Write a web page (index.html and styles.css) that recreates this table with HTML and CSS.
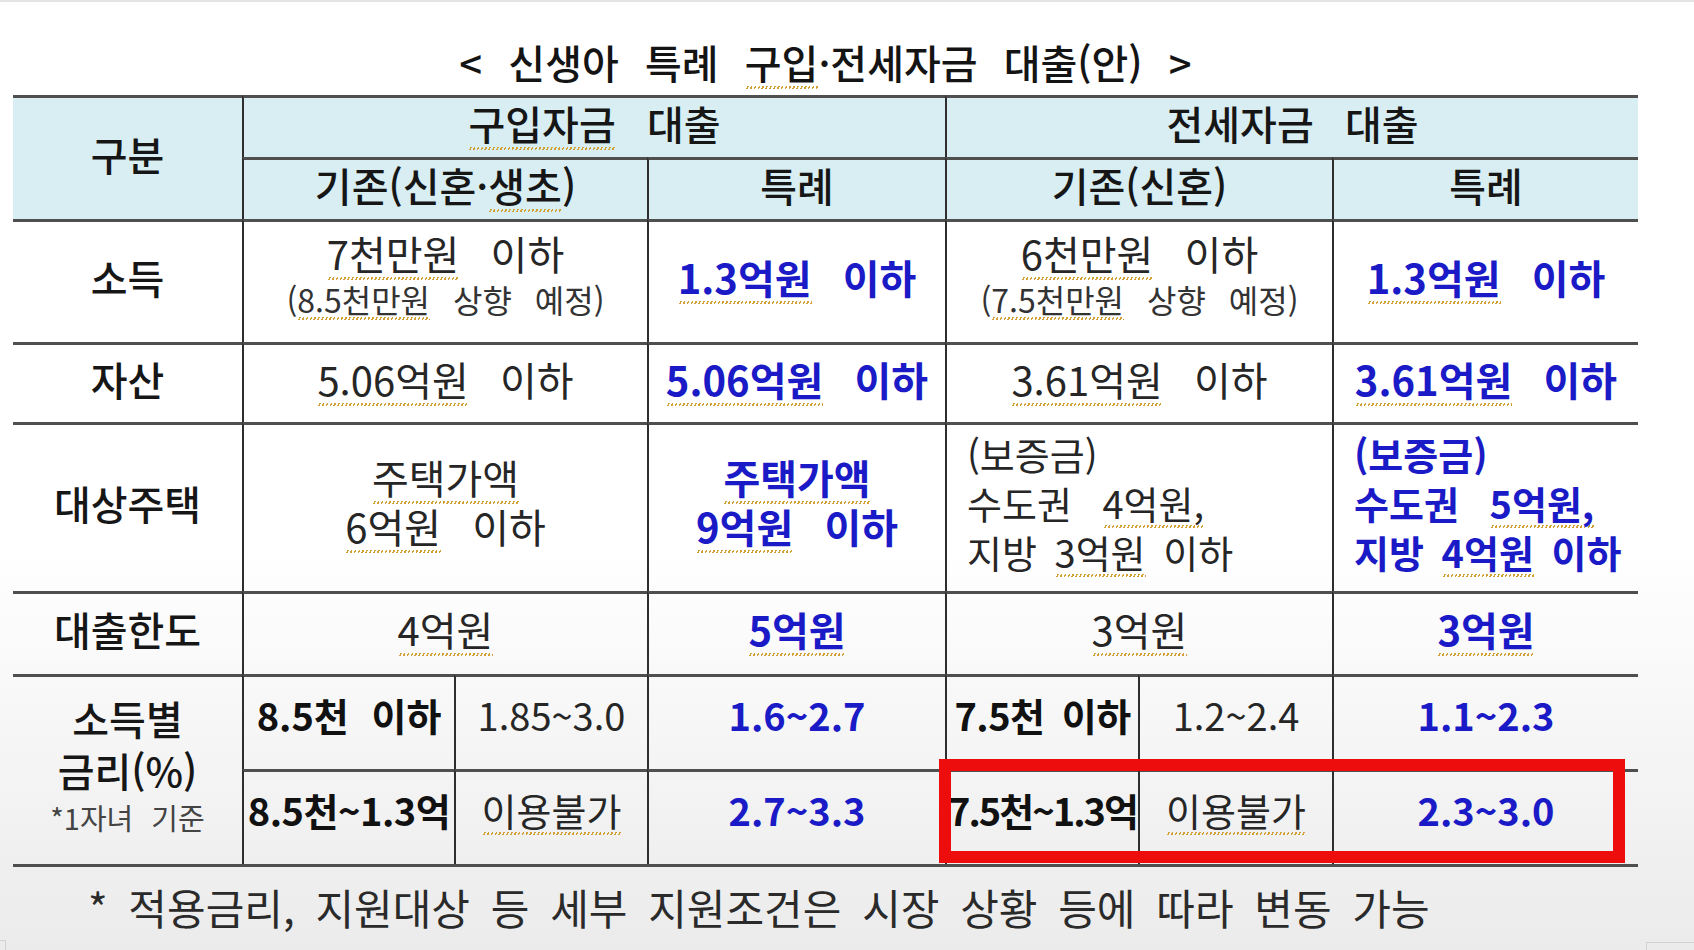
FILE: index.html
```html
<!DOCTYPE html>
<html lang="ko">
<head>
<meta charset="utf-8">
<title>신생아 특례 구입·전세자금 대출(안)</title>
<link rel="stylesheet" href="styles.css">
</head>
<body>
<div class="page">
  <div class="doc">
    <h1 class="title">&lt; 신생아 특례 <span class="sp">구입</span>·전세자금 대출(안) &gt;</h1>
    <div class="tbl">
      <div class="c first hd r2">구분</div>
      <div class="c hd s3"><div><span class="sp">구입자금</span> 대출</div></div>
      <div class="c hd s3"><div>전세자금 대출</div></div>

      <div class="c hd s2"><div>기존(신혼·<span class="sp">생초</span>)</div></div>
      <div class="c hd"><div>특례</div></div>
      <div class="c hd s2"><div>기존(신혼)</div></div>
      <div class="c hd"><div>특례</div></div>

      <div class="c first lbl">소득</div>
      <div class="c s2 inc"><div><span class="sp">7천만원</span> 이하</div><div class="small">(<span class="sp">8.5천만원</span> 상향 예정)</div></div>
      <div class="c blue"><div><span class="sp">1.3억원</span> 이하</div></div>
      <div class="c s2 inc"><div><span class="sp">6천만원</span> 이하</div><div class="small">(<span class="sp">7.5천만원</span> 상향 예정)</div></div>
      <div class="c blue"><div><span class="sp">1.3억원</span> 이하</div></div>

      <div class="c first lbl">자산</div>
      <div class="c s2"><div><span class="sp">5.06억원</span> 이하</div></div>
      <div class="c blue"><div><span class="sp">5.06억원</span> 이하</div></div>
      <div class="c s2"><div><span class="sp">3.61억원</span> 이하</div></div>
      <div class="c blue"><div><span class="sp">3.61억원</span> 이하</div></div>

      <div class="c first lbl">대상주택</div>
      <div class="c s2 house"><div><span class="sp">주택가액</span></div><div><span class="sp">6억원</span> 이하</div></div>
      <div class="c blue house"><div><span class="sp">주택가액</span></div><div><span class="sp">9억원</span> 이하</div></div>
      <div class="c s2 left house"><div>(보증금)</div><div>수도권 <span class="sp">4억원,</span></div><div class="tightws">지방 <span class="sp">3억원</span> 이하</div></div>
      <div class="c blue left house"><div>(보증금)</div><div>수도권 <span class="sp">5억원,</span></div><div class="tightws">지방 <span class="sp">4억원</span> 이하</div></div>

      <div class="c first lbl">대출한도</div>
      <div class="c s2"><div><span class="sp">4억원</span></div></div>
      <div class="c blue"><div><span class="sp">5억원</span></div></div>
      <div class="c s2"><div><span class="sp">3억원</span></div></div>
      <div class="c blue"><div><span class="sp">3억원</span></div></div>

      <div class="c first lbl r2 rate-lbl"><div>소득별</div><div>금리(%)</div><div class="cond">*1자녀 기준</div></div>
      <div class="c bold rate"><div class="ws1">8.5천 이하</div></div>
      <div class="c rate"><div>1.85~3.0</div></div>
      <div class="c blue rate"><div>1.6~2.7</div></div>
      <div class="c bold rate"><div class="ws2">7.5천 이하</div></div>
      <div class="c rate"><div>1.2~2.4</div></div>
      <div class="c blue rate"><div>1.1~2.3</div></div>

      <div class="c bold rate"><div class="tl1">8.5천~1.3억</div></div>
      <div class="c rate"><div><span class="sp">이용불가</span></div></div>
      <div class="c blue rate"><div>2.7~3.3</div></div>
      <div class="c bold rate"><div class="tl2">7.5천~1.3억</div></div>
      <div class="c rate"><div><span class="sp">이용불가</span></div></div>
      <div class="c blue rate"><div>2.3~3.0</div></div>

      <div class="highlight"></div>
    </div>
    <p class="note">* 적용금리, 지원대상 등 세부 지원조건은 시장 상황 등에 따라 변동 가능</p>
  </div>
  <div class="corner corner-l"></div>
  <div class="corner corner-r"></div>
</div>
</body>
</html>
```

FILE: styles.css
```css
* { box-sizing: border-box; }

html, body {
  margin: 0;
  height: 100%;
}

body {
  font-family: "Noto Sans CJK KR", "Noto Sans", sans-serif;
  color: #1c1c1c;
  background: linear-gradient(to bottom, #ffffff 0%, #ffffff 58%, #ebebeb 100%);
  overflow: hidden;
}

.page {
  position: relative;
  width: 1694px;
  height: 950px;
  border-top: 2px solid #e4e4e4;
}

.doc {
  padding-left: 13px;
  width: 1638px;
}

.title {
  margin: 0;
  padding: 38px 0 11px;
  width: 1625px;
  text-align: center;
  font-size: 40px;
  line-height: 44px;
  font-weight: 500;
  word-spacing: 15px;
  color: #141414;
}

.tbl {
  position: relative;
  display: grid;
  width: 1625px;
  grid-template-columns: 229px 212px 193px 298px 193px 194px 306px;
  grid-template-rows: 62px 62px 123px 80px 169px 83px 95px 95px;
  border-bottom: 3px solid #4f4f4f;
}

.c {
  border-top: 3px solid #4f4f4f;
  border-left: 2px solid #2e2e2e;
  display: flex;
  flex-direction: column;
  align-items: center;
  justify-content: center;
  text-align: center;
  font-size: 40px;
  line-height: 48px;
  word-spacing: 20px;
  white-space: nowrap;
  color: #262626;
  padding-bottom: 10px;
}

.c.first { border-left: none; }

.s2 { grid-column: span 2; }
.s3 { grid-column: span 3; }
.r2 { grid-row: span 2; }

.hd {
  background: #d8eef3;
  font-weight: 500;
  color: #161616;
}

.lbl {
  font-weight: 500;
  color: #161616;
}

.blue {
  color: #1a1ac6;
  font-weight: 700;
}

.bold {
  color: #111111;
  font-weight: 700;
}

.small {
  font-size: 32px;
  line-height: 44px;
  word-spacing: 14px;
  color: #333333;
}

.inc { padding-bottom: 14px; }

.house {
  line-height: 49px;
  padding-bottom: 12px;
}

.left {
  align-items: flex-start;
  text-align: left;
  padding-left: 20px;
  font-size: 38px;
}

.tightws { word-spacing: 7px; }

.rate {
  padding-bottom: 16px;
  font-size: 38px;
}

.rate-lbl {
  line-height: 52px;
  padding-bottom: 12px;
}

.cond {
  font-size: 29px;
  line-height: 42px;
  font-weight: 400;
  word-spacing: 10px;
  color: #444444;
}

.ws1 { word-spacing: 12px; }
.ws2 { word-spacing: 7px; letter-spacing: -0.5px; }
.tl1 { letter-spacing: -0.5px; }
.tl2 { letter-spacing: -2px; }

.sp {
  background-image: repeating-linear-gradient(115deg, rgba(214, 160, 50, 0) 0px, rgba(214, 160, 50, 0) 2px, #d2a035 2px, #d2a035 3.5px);
  background-repeat: repeat-x;
  background-size: auto 3px;
  background-position: 0 calc(100% - 2px);
}

.highlight {
  position: absolute;
  left: 926px;
  top: 664px;
  width: 686px;
  height: 104px;
  border: 12px solid #ee0d0d;
  pointer-events: none;
}

.note {
  margin: 18px 0 0;
  padding-left: 75px;
  font-size: 42px;
  line-height: 44px;
  word-spacing: 9px;
  color: #2a2a2a;
  white-space: nowrap;
}

.corner {
  position: absolute;
  border: 1px solid #d2d2d2;
}

.corner-l {
  left: -2px;
  top: 938px;
  width: 8px;
  height: 20px;
}

.corner-r {
  left: 1646px;
  top: 940px;
  width: 60px;
  height: 20px;
}
```
